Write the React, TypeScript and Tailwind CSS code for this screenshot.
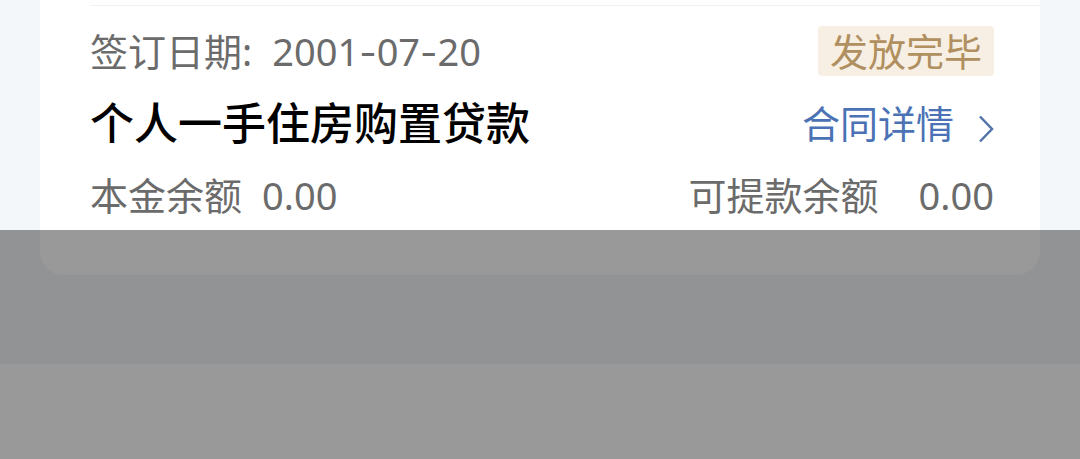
const dateParts = ["2001", "07", "20"];

export default function App() {
  return (
    <main className="flex min-h-screen flex-col bg-[#999999] font-['Noto_Sans','Noto_Sans_CJK_SC',sans-serif] text-[#6b6b6b]">
      <div className="bg-[#f3f7fa] px-10">
        <section className="bg-white pt-[5px]">
          <div className="ml-[50px] border-t border-[#f1f1f1]" />
          <div className="flex flex-col pr-[46px] pl-[50px]">
            <div className="mt-5 flex h-[50px] items-center justify-between">
              <p className="flex gap-5 text-[38px] leading-[50px]">
                <span>签订日期:</span>
                <time dateTime="2001-07-20">
                  {dateParts[0]}
                  <span className="font-['Inter']">-</span>
                  {dateParts[1]}
                  <span className="font-['Inter']">-</span>
                  {dateParts[2]}
                </time>
              </p>
              <span className="rounded bg-[#f8efe4] px-3 text-[38px] leading-[50px] text-[#b09060]">发放完毕</span>
            </div>
            <div className="mt-5 flex h-[54px] items-center justify-between">
              <h2 className="text-[44px] leading-[54px] font-medium text-black">个人一手住房购置贷款</h2>
              <a href="#contract" className="flex items-center gap-6 text-[38px] leading-[54px] text-[#4a72b5]">
                合同详情
                <svg className="mt-3" width="16" height="28" viewBox="0 0 16 28" fill="none" stroke="#5274a8" strokeWidth="2.5" aria-hidden="true">
                  <path d="M2 1.5 L14 14 L2 26.5" />
                </svg>
              </a>
            </div>
            <div className="mt-5 flex h-[60px] justify-between text-[38px] leading-[50px]">
              <p className="flex gap-5">
                <span>本金余额</span>
                <span>0.00</span>
              </p>
              <p className="flex gap-10">
                <span>可提款余额</span>
                <span>0.00</span>
              </p>
            </div>
          </div>
        </section>
      </div>
      <div className="h-[134px] bg-[#919395] px-10">
        <div className="h-[45px] rounded-b-3xl bg-[#999999]" />
      </div>
    </main>
  );
}
